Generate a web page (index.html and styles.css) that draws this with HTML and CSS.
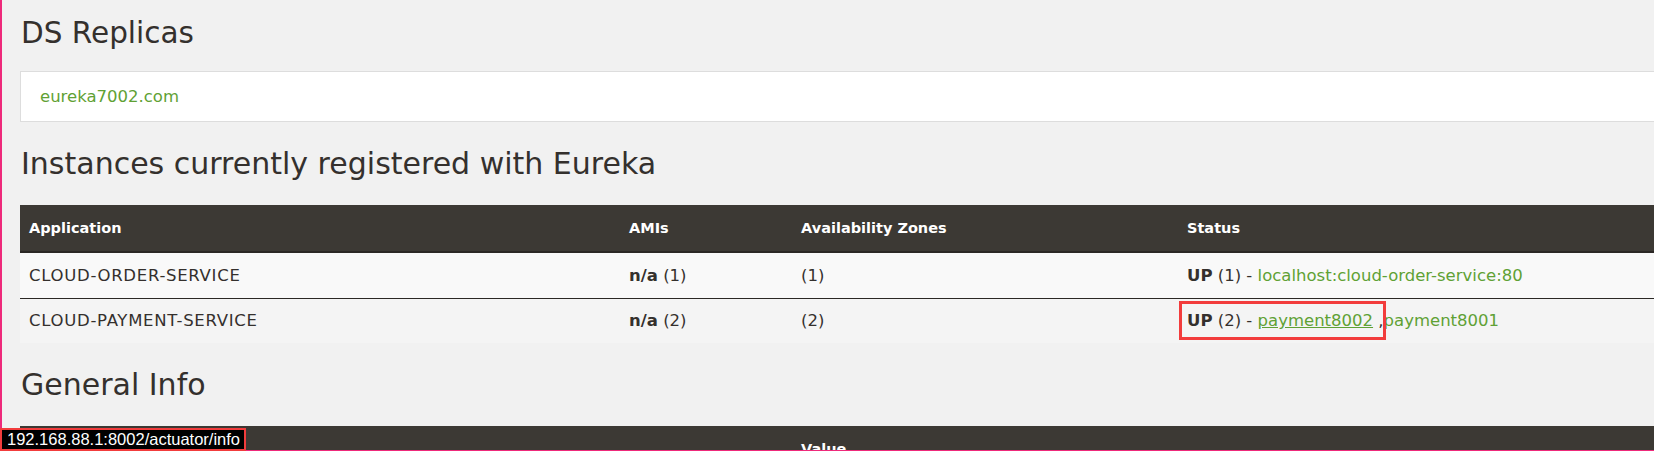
FILE: index.html
```html
<!DOCTYPE html>
<html lang="en">
<head>
<meta charset="utf-8">
<title>Eureka</title>
<link rel="stylesheet" href="styles.css">
</head>
<body>
<div class="page">
  <h1 class="title first">DS Replicas</h1>
  <ul class="replicas">
    <li><a class="link" href="#">eureka7002.com</a></li>
  </ul>
  <h1 class="title">Instances currently registered with Eureka</h1>
  <table class="grid">
    <colgroup>
      <col class="c1"><col class="c2"><col class="c3"><col class="c4">
    </colgroup>
    <thead>
      <tr><th>Application</th><th>AMIs</th><th>Availability Zones</th><th>Status</th></tr>
    </thead>
    <tbody>
      <tr class="odd">
        <td class="app">CLOUD-ORDER-SERVICE</td>
        <td><b>n/a</b> (1)</td>
        <td>(1)</td>
        <td><b>UP</b> (1) - <a class="link" href="#">localhost:cloud-order-service:80</a></td>
      </tr>
      <tr class="even">
        <td class="app">CLOUD-PAYMENT-SERVICE</td>
        <td><b>n/a</b> (2)</td>
        <td>(2)</td>
        <td class="status"><b>UP</b> (2) - <a class="link hover" href="#">payment8002</a> ,<a class="link" href="#">payment8001</a><span class="mark"></span></td>
      </tr>
    </tbody>
  </table>
  <h1 class="title">General Info</h1>
  <table class="grid">
    <colgroup>
      <col class="g1"><col class="g2">
    </colgroup>
    <thead>
      <tr><th></th><th>Value</th></tr>
    </thead>
  </table>
</div>
<div class="statusbar">192.168.88.1:8002/actuator/info</div>
</body>
</html>
```
FILE: styles.css
```css
html, body {
  margin: 0;
  padding: 0;
  background: #f1f1f1;
}
body {
  font-family: "DejaVu Sans", sans-serif;
  color: #34302d;
  overflow: hidden;
}
.page {
  box-sizing: border-box;
  height: 451px;
  overflow: hidden;
  border-left: 2px solid #ee2a7b;
  border-bottom: 1px solid #ee2a7b;
  padding-left: 18px;
}
.title {
  margin: 0;
  font-size: 30px;
  font-weight: normal;
  line-height: 36px;
  padding: 24px 0 23px 1px;
  color: #34302d;
  white-space: nowrap;
}
.title.first {
  padding: 15px 0 20px 1px;
  font-size: 29.5px;
}
.replicas {
  list-style: none;
  margin: 0;
  padding: 0 19px;
  background: #fff;
  border: 1px solid #dddddd;
  border-right: 0;
  height: 49px;
  line-height: 49px;
  font-size: 16.5px;
}
.link {
  color: #5fa134;
  text-decoration: none;
}
.link.hover {
  text-decoration: underline;
}
.grid {
  border-collapse: collapse;
  table-layout: fixed;
  width: 1634px;
}
.c1 { width: 600px; }
.c2 { width: 172px; }
.c3 { width: 386px; }
.c4 { width: 476px; }
.g1 { width: 772px; }
.g2 { width: 862px; }
.grid th {
  background: #3c3934;
  color: #fff;
  font-size: 14.5px;
  font-weight: bold;
  text-align: left;
  height: 47px;
  padding: 0 9px 1px;
  box-sizing: border-box;
  border-bottom: 2px solid #2b2825;
  white-space: nowrap;
}
.grid td {
  font-size: 16.5px;
  height: 45px;
  padding: 0 9px;
  box-sizing: border-box;
  white-space: nowrap;
}
.grid tr.odd td {
  height: 46px;
  background: #f9f9f9;
  border-bottom: 1px solid #2b2825;
}
.grid tr.even td {
  background: #f4f4f4;
}
.grid td.app {
  letter-spacing: 0.7px;
}
.grid td.status {
  position: relative;
}
.mark {
  position: absolute;
  left: 1px;
  top: 2px;
  width: 207px;
  height: 39px;
  box-sizing: border-box;
  border: 3px solid #f23c3c;
}
.statusbar {
  position: fixed;
  left: 0;
  bottom: 0;
  width: 246px;
  height: 23px;
  box-sizing: border-box;
  background: #000;
  color: #fff;
  border: 2px solid #f23c3c;
  font-family: "Liberation Sans", Arial, sans-serif;
  font-size: 16.5px;
  line-height: 19px;
  padding-left: 5px;
  white-space: nowrap;
  overflow: hidden;
}
```
